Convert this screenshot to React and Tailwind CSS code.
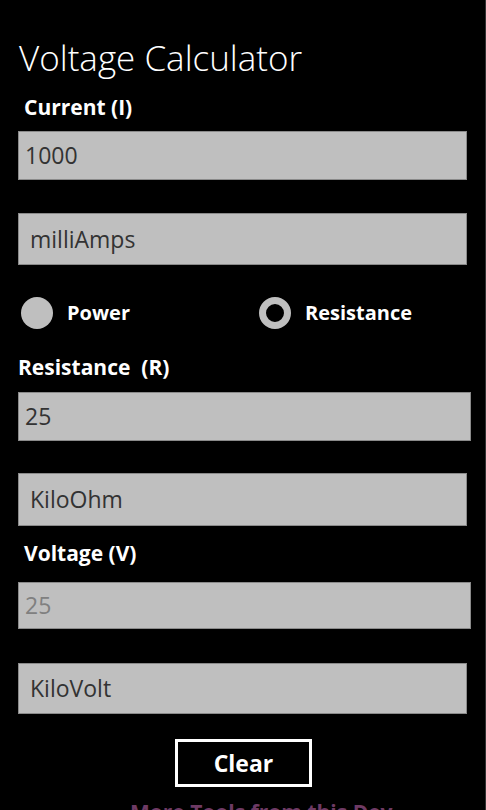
import React from 'react';

// Grey field, like the Windows Phone TextBox / ListPicker
function Field({ value, className = '', textClass = 'text-[#333]', pad = 'pl-[6px]' }) {
  return (
    <div className={`ml-[18px] flex items-center bg-[#bfbfbf] border border-[#8a8a8a] ${pad} ${className}`}>
      <span className={`text-[23px] leading-none ${textClass}`}>{value}</span>
    </div>
  );
}

function Radio({ label, checked }) {
  return (
    <div className="flex items-center gap-[14px]">
      {checked ? (
        <span className="w-[32px] h-[32px] rounded-full border-[7px] border-[#bfbfbf] bg-black" />
      ) : (
        <span className="w-[32px] h-[32px] rounded-full bg-[#bfbfbf]" />
      )}
      <span className="text-[20px] font-bold leading-none text-white">{label}</span>
    </div>
  );
}

export default function App() {
  return (
    <div className="w-[486px] h-[810px] overflow-hidden bg-black border-r border-[#333] font-['Open_Sans',sans-serif] text-white flex flex-col *:shrink-0">
      <h1 className="mt-[38px] pl-[19px] text-[35px] font-light leading-[40px]">Voltage Calculator</h1>

      <div className="mt-[17px] pl-[24px] text-[21px] font-bold leading-[24px]">Current (I)</div>
      <Field value="1000" className="mt-[12px] w-[449px] h-[49px]" />
      <Field value="milliAmps" pad="pl-[11px]" className="mt-[33px] w-[449px] h-[52px]" />

      <div className="mt-[32px] h-[32px] flex items-center">
        <div className="ml-[21px] w-[238px]">
          <Radio label="Power" />
        </div>
        <Radio label="Resistance" checked />
      </div>

      <div className="mt-[26px] pl-[18px] text-[21px] font-bold leading-[24px]">Resistance&nbsp; (R)</div>
      <Field value="25" className="mt-[13px] w-[453px] h-[49px]" />
      <Field value="KiloOhm" pad="pl-[11px]" className="mt-[32px] w-[449px] h-[53px]" />

      <div className="mt-[15px] pl-[24px] text-[21px] font-bold leading-[24px]">Voltage (V)</div>
      <Field value="25" textClass="text-[#808080]" className="mt-[17px] w-[453px] h-[47px]" />
      <Field value="KiloVolt" pad="pl-[11px]" className="mt-[34px] w-[449px] h-[51px]" />

      <button className="mt-[25px] ml-[175px] w-[137px] h-[48px] border-[3px] border-white text-[23px] font-bold text-white leading-none">
        Clear
      </button>

      <div className="mt-[15px] pl-[130px] text-[21px] font-bold leading-none text-[#6e3a64]">More Tools from this Dev</div>
    </div>
  );
}
